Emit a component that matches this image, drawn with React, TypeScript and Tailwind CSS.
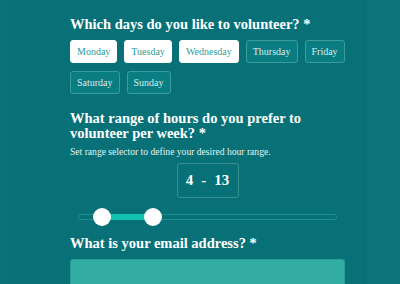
import { useState } from 'react';

const days = ['Monday', 'Tuesday', 'Wednesday', 'Thursday', 'Friday', 'Saturday', 'Sunday'];

export default function App() {
  const [selected, setSelected] = useState<string[]>(['Monday', 'Tuesday', 'Wednesday']);
  const min = 4;
  const max = 13;

  const toggle = (d: string) =>
    setSelected(s => (s.includes(d) ? s.filter(x => x !== d) : [...s, d]));

  return (
    <div
      className="relative w-[400px] h-[284px] overflow-hidden bg-[#077177] text-white"
      style={{ fontFamily: '"Liberation Serif", "DejaVu Serif", serif' }}
    >
      {/* side bands */}
      <div className="absolute inset-y-0 left-0 w-[28px] bg-gradient-to-r from-[#0a7379] to-[#077177]" />
      <div className="absolute inset-y-0 right-0 w-[33px] bg-[#0b747a]" />

      <div className="relative w-[275px] ml-[70px] pt-[15px]">
        <h2 className="text-[14.5px] font-bold leading-[18px]">Which days do you like to volunteer? *</h2>

        {/* Day pills */}
        <div className="flex flex-wrap gap-x-[7px] gap-y-[8px] mt-[7px]">
          {days.map(d => {
            const on = selected.includes(d);
            return (
              <button
                key={d}
                onClick={() => toggle(d)}
                className={`h-[23px] px-[6px] rounded-[3px] text-[10px] leading-none border ${
                  on
                    ? 'bg-white border-white text-[#2f9c97]'
                    : 'bg-[#0a7d82] border-[#3c9c9c] text-[#d8ecec]'
                }`}
              >
                {d}
              </button>
            );
          })}
        </div>

        <h2 className="text-[14.5px] font-bold leading-[15px] mt-[17px]">
          What range of hours do you prefer to volunteer per week? *
        </h2>
        <p className="text-[9.6px] leading-[12px] mt-[5px] text-[#e3f1f1]">
          Set range selector to define your desired hour range.
        </p>

        {/* Range value */}
        <div className="flex justify-center mt-[5px]">
          <div className="w-[62px] h-[35px] rounded-[3px] border border-[#3a8f90] flex items-center justify-center text-[15px] font-bold gap-[8px]">
            <span>{min}</span>
            <span>-</span>
            <span>{max}</span>
          </div>
        </div>

        {/* Slider */}
        <div className="relative h-[18px] mt-[10px] ml-[8px] w-[259px]">
          <div className="absolute left-0 right-0 top-[6px] h-[6px] rounded-full border border-[#1f8e90] bg-[#067076]" />
          <div className="absolute top-[6px] h-[6px] bg-[#10c2b1] left-[24px] w-[51px]" />
          <div className="absolute top-0 left-[15px] w-[18px] h-[18px] rounded-full bg-white" />
          <div className="absolute top-0 left-[66px] w-[18px] h-[18px] rounded-full bg-white" />
        </div>

        <h2 className="text-[14.5px] font-bold leading-[18px] mt-[8px]">What is your email address? *</h2>

        <div className="mt-[7px] h-[40px] rounded-[3px] bg-[#33aca1] border border-[#2a9c94]" />
      </div>
    </div>
  );
}
